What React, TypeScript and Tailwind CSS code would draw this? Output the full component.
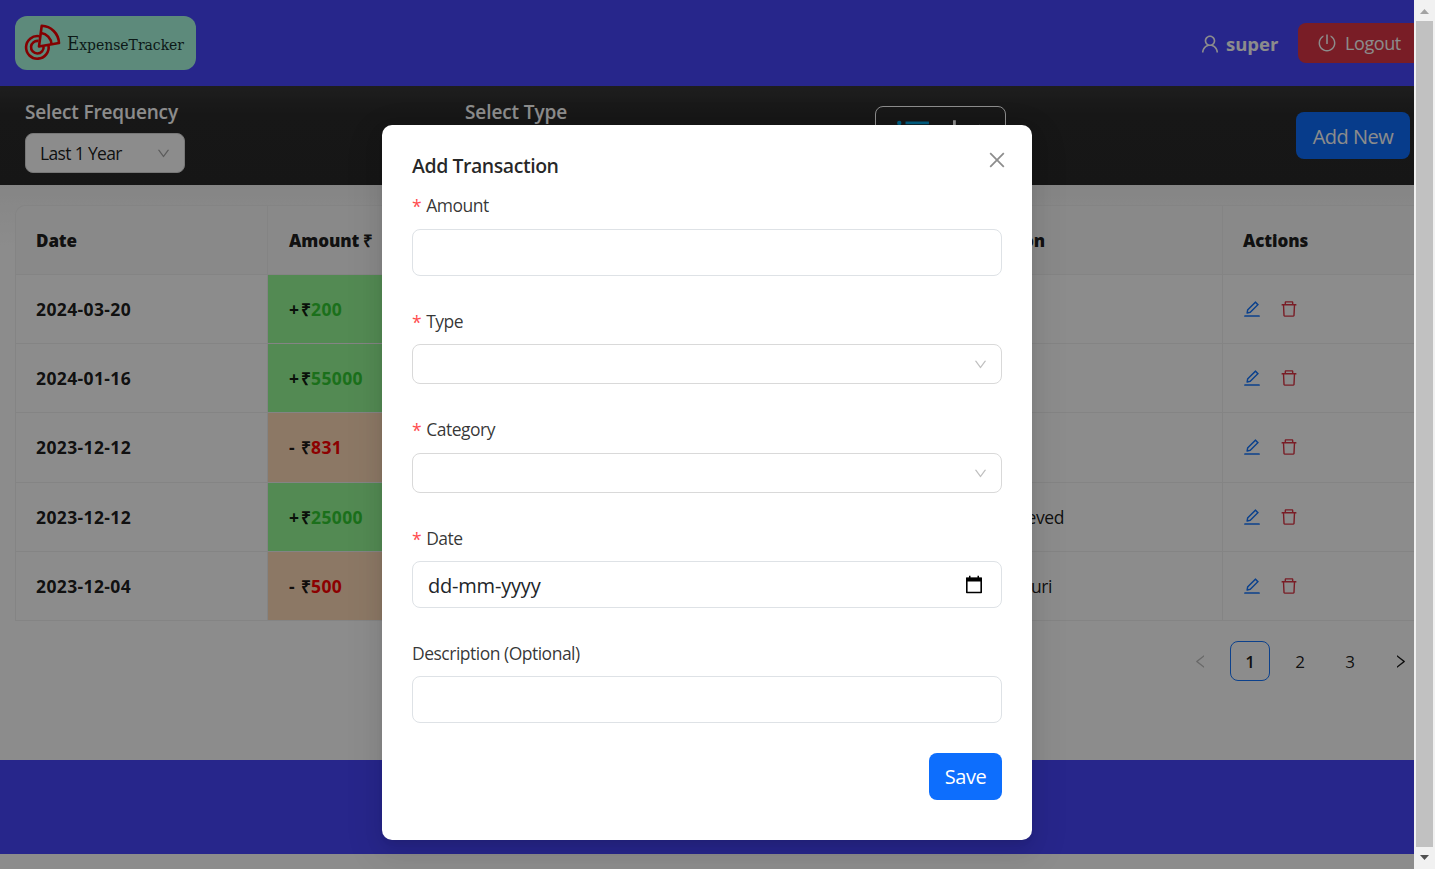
import React from "react";
import {
  AiOutlineUser, AiOutlinePoweroff, AiOutlineEdit, AiOutlineDelete, AiOutlineDown,
  AiOutlineLeft, AiOutlineRight, AiOutlineClose, AiOutlineUnorderedList, AiOutlineAreaChart,
} from "react-icons/ai";

type Row = { date: string; amount: string; income: boolean; note: string; noteWidth: string };

const rows: Row[] = [
  { date: "2024-03-20", amount: "200", income: true, note: "", noteWidth: "w-0" },
  { date: "2024-01-16", amount: "55000", income: true, note: "", noteWidth: "w-0" },
  { date: "2023-12-12", amount: "831", income: false, note: "", noteWidth: "w-0" },
  { date: "2023-12-12", amount: "25000", income: true, note: "Salary recieved", noteWidth: "w-[158px]" },
  { date: "2023-12-04", amount: "500", income: false, note: "For siliguri", noteWidth: "w-[146px]" },
];

function Logo() {
  return (
    <div className="flex h-[54px] w-[181px] items-center rounded-[12px] bg-[#aafbe0] pl-[9px]">
      <svg width="38" height="38" viewBox="0 0 38 38" fill="none" stroke="#f00000" strokeWidth="2.6">
        <path d="M15 12.200 A11.300 11.300 0 1 0 24.500 21.500" />
        <path d="M14.500 17 A6.300 6.300 0 1 0 19.600 22.500" />
        <path d="M17.700 1.800 A18 18 0 0 1 35 19 L15 22.500 Z" strokeLinejoin="round" />
        <path d="M17 9 A12 12 0 0 1 27.500 20" />
      </svg>
      <span className="mt-px ml-[5px] whitespace-nowrap font-['DejaVu_Serif_Condensed','DejaVu_Serif',serif] text-[15.5px] text-[#16302c]">
        <span className="text-[18.5px]">E</span>xpenseTracker
      </span>
    </div>
  );
}

function Header() {
  return (
    <header className="flex h-[86px] shrink-0 items-center bg-[#4745fd] pl-[15px]">
      <Logo />
      <div className="ml-auto flex items-center whitespace-nowrap text-white">
        <AiOutlineUser className="mt-[2px] size-[22px]" />
        <span className="mt-[2px] ml-[5px] w-[72px] text-[18.5px] font-bold">super</span>
        <div className="flex h-10 w-[116px] items-center rounded-l-[8px] bg-[#dc3545] pl-[19px]">
          <AiOutlinePoweroff className="size-5" />
          <span className="mt-px ml-[8px] text-[18px] tracking-[-0.4px]">Logout</span>
        </div>
      </div>
    </header>
  );
}

function Filters() {
  return (
    <section className="flex h-[99px] shrink-0 bg-linear-to-b from-[#373737] via-[#2a2a2a] via-30% to-[#292929] px-[25px] text-white">
      <div className="w-[440px] pt-[12px]">
        <h6 className="text-[19px] leading-7 font-semibold tracking-[-0.15px]">Select Frequency</h6>
        <div className="mt-[7px] flex h-10 w-40 items-center justify-between rounded-[8px] border border-[#d9d9d9] bg-white px-[14px] text-[17.5px] text-black/90">
          <span className="tracking-[-0.65px]">Last 1 Year</span>
          <AiOutlineDown className="-mr-px size-[15px] text-black/35" />
        </div>
      </div>
      <div className="w-[410px] pt-[12px]">
        <h6 className="text-[19px] leading-7 font-semibold tracking-[-0.1px]">Select Type</h6>
      </div>
      <div className="mt-5 flex h-[58px] w-[131px] items-start justify-center gap-[15px] rounded-[8px] border border-white pt-[7px]">
        <AiOutlineUnorderedList className="size-10 text-[#00a8e8]" />
        <AiOutlineAreaChart className="size-10" />
      </div>
      <button className="mt-[26px] -mr-[21px] ml-auto h-[47px] w-[114px] rounded-[8px] bg-[#0d6efd] pt-[3px] text-[20px] tracking-[-0.5px]">Add New</button>
    </section>
  );
}

function TransactionTable() {
  return (
    <div className="mt-[20px] ml-[15px] w-[1420px] rounded-tl-[10px] border-t border-l border-[#f0f0f0] text-[17px] text-black/90">
      <div className="grid h-[69px] grid-cols-[252px_638px_317px_1fr] rounded-tl-[10px] border-b border-[#f0f0f0] bg-[#fafafa] leading-[69px] font-extrabold tracking-[-0.1px]">
        <div className="h-[68px] border-r border-[#f0f0f0] pl-5">Date</div>
        <div className="h-[68px] pl-[21px]">Amount ₹</div>
        <div className="h-[68px] border-r border-[#f0f0f0]"><div className="w-[139px] text-right">Description</div></div>
        <div className="h-[68px] pl-5">Actions</div>
      </div>
      {rows.map((row, i) => (
        <div key={i} className="grid h-[69.2px] grid-cols-[252px_638px_317px_1fr] border-b border-[#f0f0f0] leading-[68.2px]">
          <div className="border-r border-[#f0f0f0] pl-5 text-[17.5px] font-bold tracking-[0.38px]">{row.date}</div>
          <div className={row.income ? "bg-[#98fb98] pl-[21px] text-[17.5px] font-bold tracking-[0.38px]" : "bg-[#ffdab9] pl-[21px] text-[17.5px] font-bold tracking-[0.38px]"}>
            <span className="inline-flex w-[22px] justify-between"><span>{row.income ? "+" : "-"}</span><span>₹</span></span>
            <span className={row.income ? "text-[#32cd32]" : "text-[#ff0000]"}>{row.amount}</span>
          </div>
          <div className="border-r border-[#f0f0f0]"><div className={"text-right whitespace-nowrap text-[17.5px] tracking-[-0.4px] " + row.noteWidth}>{row.note}</div></div>
          <div className="flex items-center gap-[17px] pl-[19px]">
            <AiOutlineEdit className="size-5 text-[#1677ff]" />
            <AiOutlineDelete className="size-5 text-[#dc3545]" />
          </div>
        </div>
      ))}
    </div>
  );
}

function Pagination() {
  return (
    <div className="mt-5 flex h-10 items-center justify-end gap-[10px] text-[17px] text-black/90">
      <span className="flex w-10 justify-center pt-px"><AiOutlineLeft className="size-[17px] text-black/25" /></span>
      <span className="flex h-10 w-10 items-center justify-center rounded-[8px] border border-[#1677ff] pt-px font-semibold">1</span>
      <span className="w-10 pt-px text-center">2</span>
      <span className="w-10 pt-px text-center">3</span>
      <span className="-mr-[6px] flex w-10 justify-center pt-px"><AiOutlineRight className="size-[17px]" /></span>
    </div>
  );
}

function Label({ text, required = true }: { text: string; required?: boolean }) {
  return (
    <div className="flex h-[30px] items-center pt-px text-[17.5px] tracking-[-0.5px] text-black/80">
      {required && <span className="mt-[2px] mr-[5px] text-[#ff4d4f]">*</span>}
      {text}
    </div>
  );
}

function SelectBox() {
  return (
    <div className="flex h-10 items-center justify-end rounded-[8px] border border-[#d9d9d9] pr-[13px]">
      <AiOutlineDown className="size-[15px] text-black/25" />
    </div>
  );
}

function AddTransactionModal() {
  return (
    <div className="absolute inset-0 flex justify-center bg-black/45 pt-[125px]">
      <div className="flex h-[715px] w-[650px] flex-col rounded-[10px] bg-white px-[30px] pt-[25px] shadow-[0_8px_20px_rgba(0,0,0,0.08),0_4px_8px_-5px_rgba(0,0,0,0.12),0_11px_35px_10px_rgba(0,0,0,0.05)]">
        <div className="flex h-8 items-center justify-between">
          <h2 className="text-[19.5px] font-semibold tracking-[-0.45px] text-black/85">Add Transaction</h2>
          <AiOutlineClose className="mr-[-6px] mb-[12px] size-[22px] text-black/45" />
        </div>
        <div className="pt-2"><Label text="Amount" /></div>
        <div className="mt-[9px] h-[47px] rounded-[8px] border border-[#dee2e6]" />
        <div className="mt-[30px]"><Label text="Type" /></div>
        <div className="mt-2"><SelectBox /></div>
        <div className="mt-[30px]"><Label text="Category" /></div>
        <div className="mt-[9px]"><SelectBox /></div>
        <div className="mt-[30px]"><Label text="Date" /></div>
        <div className="mt-2 flex h-[47px] items-center justify-between rounded-[8px] border border-[#dee2e6] pr-[18px] pl-[15px] text-[20px] tracking-[-0.2px] text-[#212529]">
          <span className="pt-[3px]">dd-mm-yyyy</span>
          <svg width="18" height="20" viewBox="0 0 18 20" fill="none">
            <path d="M1.800 3.500h14.400v14H1.800z" stroke="#000" strokeWidth="1.600" strokeLinejoin="round" />
            <path d="M1 2.500h16v4H1zM4 .8h1.500v3H4zM12.500 .8h1.500v3h-1.500z" fill="#000" />
          </svg>
        </div>
        <div className="mt-[30px]"><Label text="Description (Optional)" required={false} /></div>
        <div className="mt-2 h-[47px] rounded-[8px] border border-[#dee2e6]" />
        <button className="mt-[30px] h-[47px] w-[73px] self-end rounded-[8px] bg-[#0d6efd] pt-px text-[20px] tracking-[-0.5px] text-white">Save</button>
      </div>
    </div>
  );
}

function Scrollbar() {
  return (
    <div className="flex w-[21px] shrink-0 flex-col items-center bg-[#f1f1f1]">
      <svg width="21" height="21" viewBox="0 0 21 21"><path d="M6 14l4.500-5 4.500 5z" fill="#a3a3a3" /></svg>
      <div className="w-[17px] flex-1 bg-[#c1c1c1]" />
      <svg width="21" height="22" viewBox="0 0 21 22"><path d="M6 8l4.500 5 4.500-5z" fill="#505050" /></svg>
    </div>
  );
}

export default function App() {
  return (
    <div className="flex h-[869px] w-[1435px] overflow-hidden bg-white font-['Open_Sans',sans-serif]">
      <div className="relative flex w-[1414px] flex-col overflow-hidden">
        <Header />
        <Filters />
        <main className="h-[575px] shrink-0 bg-linear-to-b from-[#f3f3f3] to-white to-[60px]">
          <TransactionTable />
          <Pagination />
        </main>
        <footer className="h-[94px] shrink-0 bg-[#4745fd]" />
        <AddTransactionModal />
      </div>
      <Scrollbar />
    </div>
  );
}
